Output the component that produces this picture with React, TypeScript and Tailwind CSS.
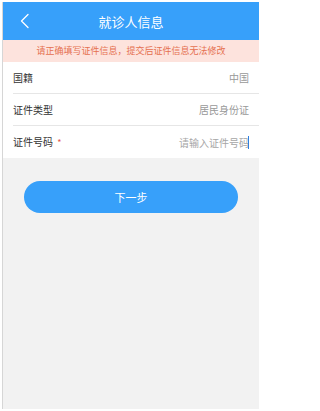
const rows = [
  { label: "国籍", value: "中国" },
  { label: "证件类型", value: "居民身份证" },
];

const App = () => {
  return (
    <div
      className="w-[261px] h-[411px] bg-white pt-[2px] pl-[2px] pr-[2px] pb-[2px]"
      style={{ fontFamily: '"Noto Sans CJK SC", "Noto Sans", sans-serif' }}
    >
      <div className="h-full flex flex-col bg-[#f2f2f2] border-l border-[#d6d6d6]">
        <header className="h-[38px] bg-[#37a0fa] flex items-center relative shrink-0">
          <svg className="absolute left-[16px] top-[11px]" width="12" height="16" viewBox="0 0 12 16" fill="none">
            <path d="M9 1.5 L2.5 8 L9 14.5" stroke="#ffffff" strokeWidth="1.3" strokeLinecap="round" strokeLinejoin="round" />
          </svg>
          <h1 className="w-full text-center text-white text-[13px] leading-none">就诊人信息</h1>
        </header>
        <div className="h-[22px] bg-[#fde3dd] flex items-center justify-center text-[9px] text-[#e5704f] shrink-0">
          请正确填写证件信息，提交后证件信息无法修改
        </div>
        <div className="bg-white pl-[10px]">
          {rows.map((r) => (
            <div key={r.label} className="h-[32px] flex items-center justify-between pr-[10px] border-b border-[#e6e6e6]">
              <span className="text-[10px] text-[#333333]">{r.label}</span>
              <span className="text-[10px] text-[#999999]">{r.value}</span>
            </div>
          ))}
          <div className="h-[32px] flex items-center justify-between pr-[10px]">
            <span className="text-[10px] text-[#333333]">
              证件号码 <span className="text-[#e5574f] text-[9px] ml-[2px]">*</span>
            </span>
            <span className="flex items-center text-[10px] text-[#a6a6a6]">
              请输入证件号码
              <span className="w-[1px] h-[13px] bg-[#2d7fe0] -ml-[1px]" />
            </span>
          </div>
        </div>
        <div className="pt-[23px] px-[21px]">
          <button className="w-[214px] h-[32px] rounded-full bg-[#37a0fa] text-white text-[11px]">下一步</button>
        </div>
      </div>
    </div>
  );
};

export default App;
